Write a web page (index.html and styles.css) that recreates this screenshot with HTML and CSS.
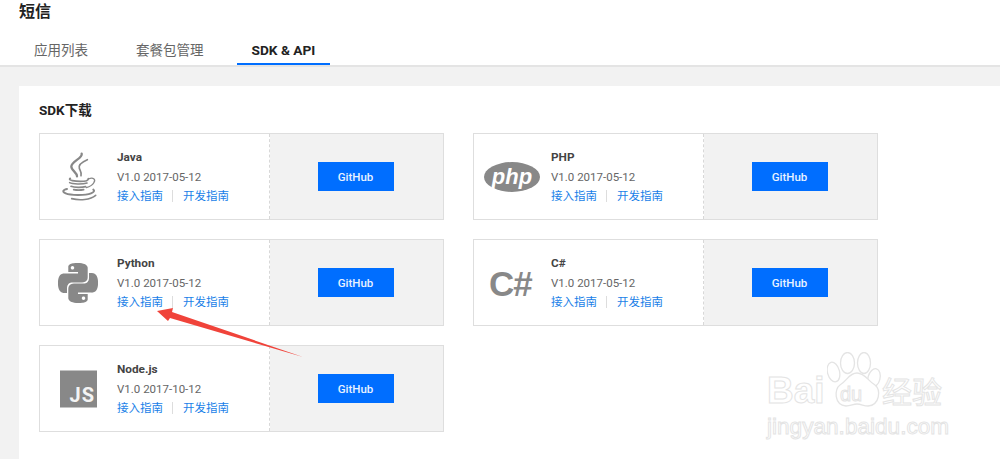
FILE: index.html
```html
<!DOCTYPE html>
<html lang="zh-CN">
<head>
<meta charset="utf-8">
<title>短信</title>
<link rel="stylesheet" href="styles.css">
</head>
<body>
<header class="top">
  <h1 class="title">短信</h1>
  <nav class="tabs">
    <a class="tab">应用列表</a>
    <a class="tab">套餐包管理</a>
    <a class="tab active">SDK &amp; API</a>
  </nav>
</header>
<main class="main">
  <section class="panel">
    <h2 class="heading">SDK下载</h2>
    <div class="grid">
      <article class="card">
        <div class="info">
          <svg class="logo logo-java" viewBox="85 65 120 150" fill="none" stroke="#888" stroke-linecap="round">
            <path d="M156 70c4 14-30 22-31 38-1 12 17 18 17 30" stroke-width="7"/>
            <path d="M173 88c-14 6-28 14-24 26 2 7 8 12 5 22" stroke-width="5"/>
            <path d="M122 144c-10 6 16 9 30 9 12 0 24-2 24-8" stroke-width="5"/>
            <path d="M120 157c8 5 40 5 52 1M124 168c10 4 32 4 44 1M132 178c10 2 20 2 30 0" stroke-width="5"/>
            <path d="M176 146c14-6 24 0 16 12-4 7-12 11-22 14" stroke-width="4"/>
            <path d="M112 176c-14 3-14 9-4 13 14 6 58 7 76 0 10-4 11-8 7-11" stroke-width="6"/>
            <path d="M126 205c24 6 56 4 72-10" stroke-width="5"/>
          </svg>
          <div class="meta">
            <h3 class="name">Java</h3>
            <p class="version">V1.0 2017-05-12</p>
            <p class="links"><a>接入指南</a><i class="sep"></i><a>开发指南</a></p>
          </div>
        </div>
        <div class="action"><a class="btn">GitHub</a></div>
      </article>
      <article class="card">
        <div class="info">
          <svg class="logo logo-php" viewBox="0 0 56 30"><ellipse cx="28" cy="15" rx="28" ry="15" fill="#888"/><text class="php-text" x="28" y="21.5" text-anchor="middle">php</text></svg>
          <div class="meta">
            <h3 class="name">PHP</h3>
            <p class="version">V1.0 2017-05-12</p>
            <p class="links"><a>接入指南</a><i class="sep"></i><a>开发指南</a></p>
          </div>
        </div>
        <div class="action"><a class="btn">GitHub</a></div>
      </article>
      <article class="card">
        <div class="info">
          <svg class="logo logo-py" viewBox="0 0 24 24"><path fill="#888" d="M14.25.18l.9.2.73.26.59.3.45.32.34.34.25.34.16.33.1.3.04.26.02.2-.01.13V8.5l-.05.63-.13.55-.21.46-.26.38-.3.31-.33.25-.35.19-.35.14-.33.1-.3.07-.26.04-.21.02H8.77l-.69.05-.59.14-.5.22-.41.27-.33.32-.27.35-.2.36-.15.37-.1.35-.07.32-.04.27-.02.21v3.06H3.17l-.21-.03-.28-.07-.32-.12-.35-.18-.36-.26-.36-.36-.35-.46-.32-.59-.28-.73-.21-.88-.14-1.05-.05-1.23.06-1.22.16-1.04.24-.87.32-.71.36-.57.4-.44.42-.33.42-.24.4-.16.36-.1.32-.05.24-.01h.16l.06.01h8.16v-.83H6.18l-.01-2.75-.02-.37.05-.34.11-.31.17-.28.25-.26.31-.23.38-.2.44-.18.51-.15.58-.12.64-.1.71-.06.77-.04.84-.02 1.27.05zm-6.3 1.98l-.23.33-.08.41.08.41.23.34.33.22.41.09.41-.09.33-.22.23-.34.08-.41-.08-.41-.23-.33-.33-.22-.41-.09-.41.09zm13.09 3.95l.28.06.32.12.35.18.36.27.36.35.35.47.32.59.28.73.21.88.14 1.04.05 1.23-.06 1.23-.16 1.04-.24.86-.32.71-.36.57-.4.45-.42.33-.42.24-.4.16-.36.09-.32.05-.24.02-.16-.01h-8.22v.82h5.84l.01 2.76.02.36-.05.34-.11.31-.17.29-.25.25-.31.24-.38.2-.44.17-.51.15-.58.13-.64.09-.71.07-.77.04-.84.01-1.27-.04-1.07-.14-.9-.2-.73-.25-.59-.3-.45-.33-.34-.34-.25-.34-.16-.33-.1-.3-.04-.25-.02-.2.01-.13v-5.34l.05-.64.13-.54.21-.46.26-.38.3-.32.33-.24.35-.2.35-.14.33-.1.3-.06.26-.04.21-.02.13-.01h5.84l.69-.05.59-.14.5-.21.41-.28.33-.32.27-.35.2-.36.15-.36.1-.35.07-.32.04-.28.02-.21V6.07h2.09l.14.01zm-6.47 14.25l-.23.33-.08.41.08.41.23.33.33.23.41.08.41-.08.33-.23.23-.33.08-.41-.08-.41-.23-.33-.33-.23-.41-.08-.41.08z"/></svg>
          <div class="meta">
            <h3 class="name">Python</h3>
            <p class="version">V1.0 2017-05-12</p>
            <p class="links"><a>接入指南</a><i class="sep"></i><a>开发指南</a></p>
          </div>
        </div>
        <div class="action"><a class="btn">GitHub</a></div>
      </article>
      <article class="card">
        <div class="info">
          <span class="logo csharp">C#</span>
          <div class="meta">
            <h3 class="name">C#</h3>
            <p class="version">V1.0 2017-05-12</p>
            <p class="links"><a>接入指南</a><i class="sep"></i><a>开发指南</a></p>
          </div>
        </div>
        <div class="action"><a class="btn">GitHub</a></div>
      </article>
      <article class="card">
        <div class="info">
          <span class="logo js">JS</span>
          <div class="meta">
            <h3 class="name">Node.js</h3>
            <p class="version">V1.0 2017-10-12</p>
            <p class="links"><a>接入指南</a><i class="sep"></i><a>开发指南</a></p>
          </div>
        </div>
        <div class="action"><a class="btn">GitHub</a></div>
      </article>
    </div>
  </section>
</main>
<svg class="arrow" viewBox="0 0 150 55"><path fill="#f0433a" d="M2 6L18 3 17 7 148 52 15 13 13 16z"/></svg>
<div class="mark">
  <svg class="paw" viewBox="0 0 56 56" fill="#fff" stroke="#e4e4e4" stroke-width="1.3">
    <ellipse cx="6.5" cy="20" rx="6" ry="10" transform="rotate(-15 6.5 20)"/>
    <ellipse cx="20.5" cy="11" rx="7" ry="10.5"/>
    <ellipse cx="37" cy="11" rx="6.5" ry="10.5"/>
    <ellipse cx="47" cy="26" rx="6" ry="9.5" transform="rotate(15 47 26)"/>
    <path d="M30 21c-8 0-10 8-17 12-6 4-6 20 6 21 5 0 7-2 11-2s7 2 11 2c12-1 13-16 7-21-7-4-10-12-18-12z"/>
  </svg>
  <span class="mark-bai">Bai</span>
  <span class="mark-du">du</span>
  <span class="mark-cn">经验</span>
  <span class="mark-url">jingyan.baidu.com</span>
</div>
</body>
</html>
```
FILE: styles.css
```css
* { box-sizing: border-box; }
html, body { height: 100%; }
body {
  margin: 0;
  position: relative;
  overflow: hidden;
  display: flex;
  flex-direction: column;
  background: #f2f2f2;
  font-family: Roboto, "Noto Sans CJK SC", sans-serif;
  color: #333;
}
h1, h2, h3, p { margin: 0; }

.top {
  height: 67px;
  flex: none;
  background: #fff;
  border-bottom: 2px solid #e4e4e4;
  padding: 0 0 0 19px;
}
.title { font-size: 16px; line-height: 24px; font-weight: 700; color: #222; }
.tabs { display: flex; gap: 18px; margin-top: 14px; }
.tab {
  height: 27px;
  padding: 0 15px;
  font-size: 13.5px;
  line-height: 24px;
  color: #666;
  white-space: nowrap;
}
.tab.active {
  font-weight: 700;
  font-size: 13.7px;
  color: #222;
  border-bottom: 2px solid #006eff;
}

.main { flex: 1; padding: 19px 0 0 19px; display: flex; }
.panel { flex: 1; background: #fff; padding: 15px 20px 0; }
.heading { font-size: 13.5px; line-height: 18px; font-weight: 700; color: #222; }
.grid {
  display: grid;
  grid-template-columns: 405px 405px;
  grid-auto-rows: 87px;
  column-gap: 29px;
  row-gap: 19px;
  margin-top: 14px;
}

.card { display: flex; border: 1px solid #dedede; background: #fff; }
.info {
  width: 230px;
  flex: none;
  display: flex;
  align-items: center;
  border-right: 1px dashed #d8d8d8;
  position: relative;
  padding-left: 77px;
}
.logo { position: absolute; left: 10px; top: 50%; transform: translateY(-50%); }
.logo-java { left: 18px; width: 40px; height: 50px; }
.logo-php { width: 56px; height: 30px; }
.logo-py { left: 18px; width: 40px; height: 40px; }
.meta { display: flex; flex-direction: column; margin-top: 2px; }
.name { font-size: 11.8px; line-height: 14px; font-weight: 700; color: #444; }
.version { font-size: 11.5px; line-height: 19px; margin-top: 4px; color: #666; white-space: nowrap; }
.links { display: flex; align-items: center; font-size: 11.5px; line-height: 19px; color: #1a7fe8; white-space: nowrap; }
.sep { width: 1px; height: 12px; background: #ddd; margin: 0 10px 0 9px; }

.action { flex: 1; background: #f2f2f2; display: flex; align-items: center; justify-content: center; padding: 0 2px 1px 0; }
.btn {
  width: 76px;
  height: 29px;
  background: #006eff;
  color: #e8f2ff;
  font-size: 11.5px;
  font-weight: 500;
  line-height: 30px;
  text-align: center;
}

.php-text { font: italic 700 22px "Liberation Sans", sans-serif; fill: #fff; }
.csharp { font: 700 35px/1 "Liberation Sans", sans-serif; color: #888; left: 15px; letter-spacing: -1px; }
.js {
  width: 37px;
  height: 37px;
  left: 20px;
  background: #888;
  color: #f4f4f4;
  font: 700 20px/1 Roboto, sans-serif;
  letter-spacing: 1px;
  display: flex;
  align-items: flex-end;
  justify-content: flex-end;
  padding: 0 2px 3px 0;
}

.arrow { position: absolute; left: 155px; top: 305px; width: 150px; height: 55px; }

.mark { position: absolute; left: 767px; top: 352px; width: 180px; height: 90px; color: transparent; }
.mark span { position: absolute; white-space: nowrap; -webkit-text-stroke: 1px #e4e4e4; font-family: "Liberation Sans", sans-serif; }
.paw { position: absolute; left: 60px; top: 0; width: 56px; height: 56px; }
.mark-bai { left: 0; top: 18px; font-size: 37px; line-height: 42px; font-weight: 700; }
.mark-du { left: 73px; top: 31px; font-size: 20px; line-height: 22px; }
.mark-cn { left: 115px; top: 23px; font-size: 30px; line-height: 36px; }
.mark-url { left: 0; top: 62px; font-size: 22.6px; line-height: 26px; }
```
